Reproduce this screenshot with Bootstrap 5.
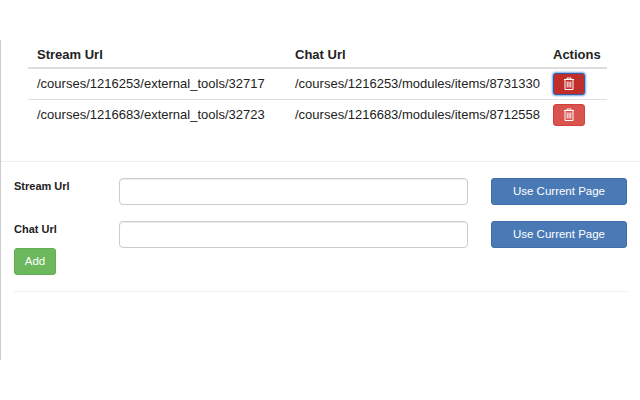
<!DOCTYPE html>
<html lang="en">
<head>
<meta charset="utf-8">
<title>Streams</title>
<link rel="stylesheet" href="https://cdn.jsdelivr.net/npm/bootstrap@5.3.0/dist/css/bootstrap.min.css">
<style>
html,body{background:#fff;}
body{font-family:"Liberation Sans",Arial,sans-serif;font-size:13px;color:#222;overflow:hidden;height:400px;}
.shell{margin-top:40px;height:320px;border-left:1px solid #ccc;box-sizing:border-box;}
.table-zone{padding:0 33px 0 27px;height:122px;border-bottom:1px solid #eee;}
.url-table{width:579px;margin:0;table-layout:fixed;color:#222;font-size:13px;}
.url-table th{font-size:13px;font-weight:700;padding:6px 0 4px 9px;height:27px;border-bottom:2px solid #ddd;color:#222;line-height:17px;}
.url-table td{padding:0 0 0 9px;height:31px;border-bottom:1px solid #ddd;vertical-align:middle;line-height:17px;}
.url-table tr:last-child td{border-bottom:0;}
.trash-btn{width:32px;height:22px;padding:0;background:#d9534f;border:1px solid #d43f3a;border-radius:3px;display:flex;align-items:center;justify-content:center;}
.trash-btn:hover{background:#d9534f;border-color:#d43f3a;}
.trash-on{background:#c12e2a;border-color:#2e5fa8;box-shadow:0 0 2px 1px #7ba4e0;}
.trash-on:hover{background:#c12e2a;border-color:#2e5fa8;}
.form-zone{padding:16px 13px 0 13px;}
.field-row{display:flex;align-items:flex-start;height:27px;margin-bottom:16px;}
.field-row-b{margin-bottom:0;}
.field-label{width:105px;font-weight:700;font-size:11px;line-height:14px;padding-top:1px;color:#222;flex:none;margin:0;}
.url-input{width:349px;height:27px;flex:none;border:1px solid #ccc;border-radius:4px;box-shadow:inset 0 1px 1px rgba(0,0,0,.075);padding:2px 8px;font-size:12px;}
.use-btn{width:136px;height:27px;flex:none;margin-left:23px;padding:0;font-size:11.5px;line-height:25px;background:#4a7ab5;border:1px solid #3f6fa8;border-radius:3px;color:#fff;}
.use-btn:hover{background:#4a7ab5;border-color:#3f6fa8;color:#fff;}
.add-btn{display:block;width:42px;height:27px;padding:0;margin-top:0;font-size:11.5px;line-height:25px;background:#6cb85c;border:1px solid #63ad54;border-radius:3px;color:#fff;}
.add-btn:hover{background:#6cb85c;border-color:#63ad54;color:#fff;}
.end-rule{margin:16px 0 0;border:0;border-top:1px solid #eee;opacity:1;width:613px;}
</style>
</head>
<body>
<div class="shell">
  <div class="table-zone">
    <table class="table url-table">
      <colgroup><col style="width:258px"><col style="width:258px"><col></colgroup>
      <thead><tr><th>Stream Url</th><th>Chat Url</th><th>Actions</th></tr></thead>
      <tbody>
        <tr>
          <td>/courses/1216253/external_tools/32717</td>
          <td>/courses/1216253/modules/items/8731330</td>
          <td><button type="button" class="btn trash-btn trash-on" aria-label="Delete"><svg width="12" height="13" viewBox="0 0 12 13" fill="none" stroke="#fff"><path d="M1 2.5h10M4 2.5V1h4v1.5M2 2.5V12.500h8V2.500M4.200 4.500v6M6 4.500v6M7.800 4.500v6"/></svg></button></td>
        </tr>
        <tr>
          <td>/courses/1216683/external_tools/32723</td>
          <td>/courses/1216683/modules/items/8712558</td>
          <td><button type="button" class="btn trash-btn" aria-label="Delete"><svg width="12" height="13" viewBox="0 0 12 13" fill="none" stroke="#fff"><path d="M1 2.5h10M4 2.5V1h4v1.5M2 2.5V12.500h8V2.500M4.200 4.500v6M6 4.500v6M7.800 4.500v6"/></svg></button></td>
        </tr>
      </tbody>
    </table>
  </div>
  <div class="form-zone">
    <div class="field-row">
      <label class="field-label">Stream Url</label>
      <input class="form-control url-input" type="text" aria-label="Stream Url">
      <button type="button" class="btn use-btn">Use Current Page</button>
    </div>
    <div class="field-row field-row-b">
      <label class="field-label">Chat Url</label>
      <input class="form-control url-input" type="text" aria-label="Chat Url">
      <button type="button" class="btn use-btn">Use Current Page</button>
    </div>
    <button type="button" class="btn add-btn">Add</button>
    <hr class="end-rule">
  </div>
</div>
<script src="https://cdn.jsdelivr.net/npm/bootstrap@5.3.0/dist/js/bootstrap.bundle.min.js"></script>
</body>
</html>
